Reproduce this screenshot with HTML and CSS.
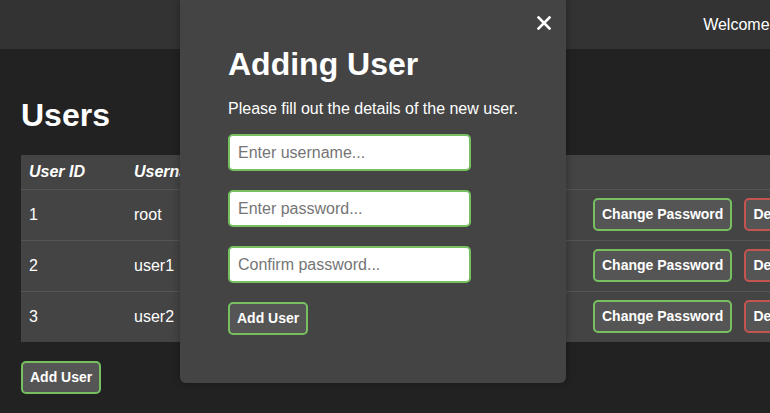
FILE: index.html
```html
<!DOCTYPE html>
<html lang="en">
<head>
<meta charset="utf-8">
<title>Users</title>
<link rel="stylesheet" href="styles.css">
</head>
<body>
<div class="page">
  <header class="topbar">
    <span class="welcome">Welcome, root</span>
  </header>
  <main class="content">
    <h1 class="title">Users</h1>
    <table class="users">
      <colgroup>
        <col class="col-id">
        <col class="col-name">
        <col class="col-actions">
      </colgroup>
      <thead>
        <tr><th>User ID</th><th>Username</th><th></th></tr>
      </thead>
      <tbody>
        <tr>
          <td>1</td><td>root</td>
          <td><div class="actions"><button class="btn">Change Password</button><button class="btn btn-danger">Delete</button></div></td>
        </tr>
        <tr>
          <td>2</td><td>user1</td>
          <td><div class="actions"><button class="btn">Change Password</button><button class="btn btn-danger">Delete</button></div></td>
        </tr>
        <tr>
          <td>3</td><td>user2</td>
          <td><div class="actions"><button class="btn">Change Password</button><button class="btn btn-danger">Delete</button></div></td>
        </tr>
      </tbody>
    </table>
    <button class="btn add-btn">Add User</button>
  </main>

  <div class="modal">
    <button class="modal-close" aria-label="Close">
      <svg width="14" height="14" viewBox="0 0 14 14"><path d="M1.5 1.5 L12.5 12.5 M12.5 1.5 L1.5 12.5" stroke="#fff" stroke-width="2.6" stroke-linecap="square" fill="none"/></svg>
    </button>
    <h2 class="modal-title">Adding User</h2>
    <p class="modal-text">Please fill out the details of the new user.</p>
    <form class="modal-form">
      <input class="field" type="text" placeholder="Enter username...">
      <input class="field" type="password" placeholder="Enter password...">
      <input class="field" type="password" placeholder="Confirm password...">
      <div><button type="button" class="btn">Add User</button></div>
    </form>
  </div>
</div>
</body>
</html>
```
FILE: styles.css
```css
html, body {
  margin: 0;
  padding: 0;
  overflow: hidden;
  background: #222;
}
body {
  font-family: "Liberation Sans", Arial, sans-serif;
  color: #fff;
  font-size: 16px;
}
.page {
  position: relative;
  width: 833px;
  min-height: 413px;
}
.topbar {
  height: 49px;
  background: #333;
  display: flex;
  align-items: center;
  justify-content: flex-end;
  padding-right: 27px;
}
.welcome {
  font-size: 16px;
  line-height: 18px;
}
.content {
  padding: 0 21px;
}
.title {
  margin: 48px 0 21px;
  font-size: 32px;
  line-height: 37px;
  font-weight: bold;
}
.users {
  width: 791px;
  border-collapse: collapse;
  background: #444;
  table-layout: fixed;
}
.col-id { width: 105px; }
.col-actions { width: 227px; }
.users th {
  text-align: left;
  font-style: italic;
  font-weight: bold;
  padding: 8px;
  line-height: 18px;
}
.users td {
  padding: 8px 8px 9px;
  border-top: 1px solid #555;
  line-height: 18px;
  vertical-align: middle;
}
.actions {
  display: flex;
  gap: 12px;
}
.btn {
  font-family: "Liberation Sans", Arial, sans-serif;
  font-size: 14px;
  font-weight: bold;
  line-height: 17px;
  color: #fff;
  background: #555;
  border: 2px solid #76c060;
  border-radius: 5px;
  padding: 6px 7px;
  white-space: nowrap;
}
.btn-danger {
  border-color: #c4544f;
}
.add-btn {
  margin-top: 19px;
}
.modal {
  position: absolute;
  left: 180px;
  top: 0;
  width: 386px;
  box-sizing: border-box;
  padding: 46px 48px 48px;
  background: #444;
  border-radius: 0 0 6px 6px;
  box-shadow: 0 0 8px rgba(0, 0, 0, 0.35);
}
.modal-close {
  position: absolute;
  top: 16px;
  right: 15px;
  width: 14px;
  height: 14px;
  padding: 0;
  border: 0;
  background: none;
  display: block;
}
.modal-close svg { display: block; }
.modal-title {
  margin: 0 0 17px;
  font-size: 32px;
  line-height: 37px;
  font-weight: bold;
}
.modal-text {
  margin: 0 0 16px;
  font-size: 16px;
  line-height: 18px;
}
.modal-form {
  display: flex;
  flex-direction: column;
  gap: 19px;
  margin: 0;
}
.field {
  width: 243px;
  height: 37px;
  box-sizing: border-box;
  padding: 8px;
  font-family: "Liberation Sans", Arial, sans-serif;
  font-size: 16px;
  color: #333;
  background: #fff;
  border: 2px solid #76c060;
  border-radius: 5px;
  outline: none;
}
.field::placeholder {
  color: #757575;
}
```
